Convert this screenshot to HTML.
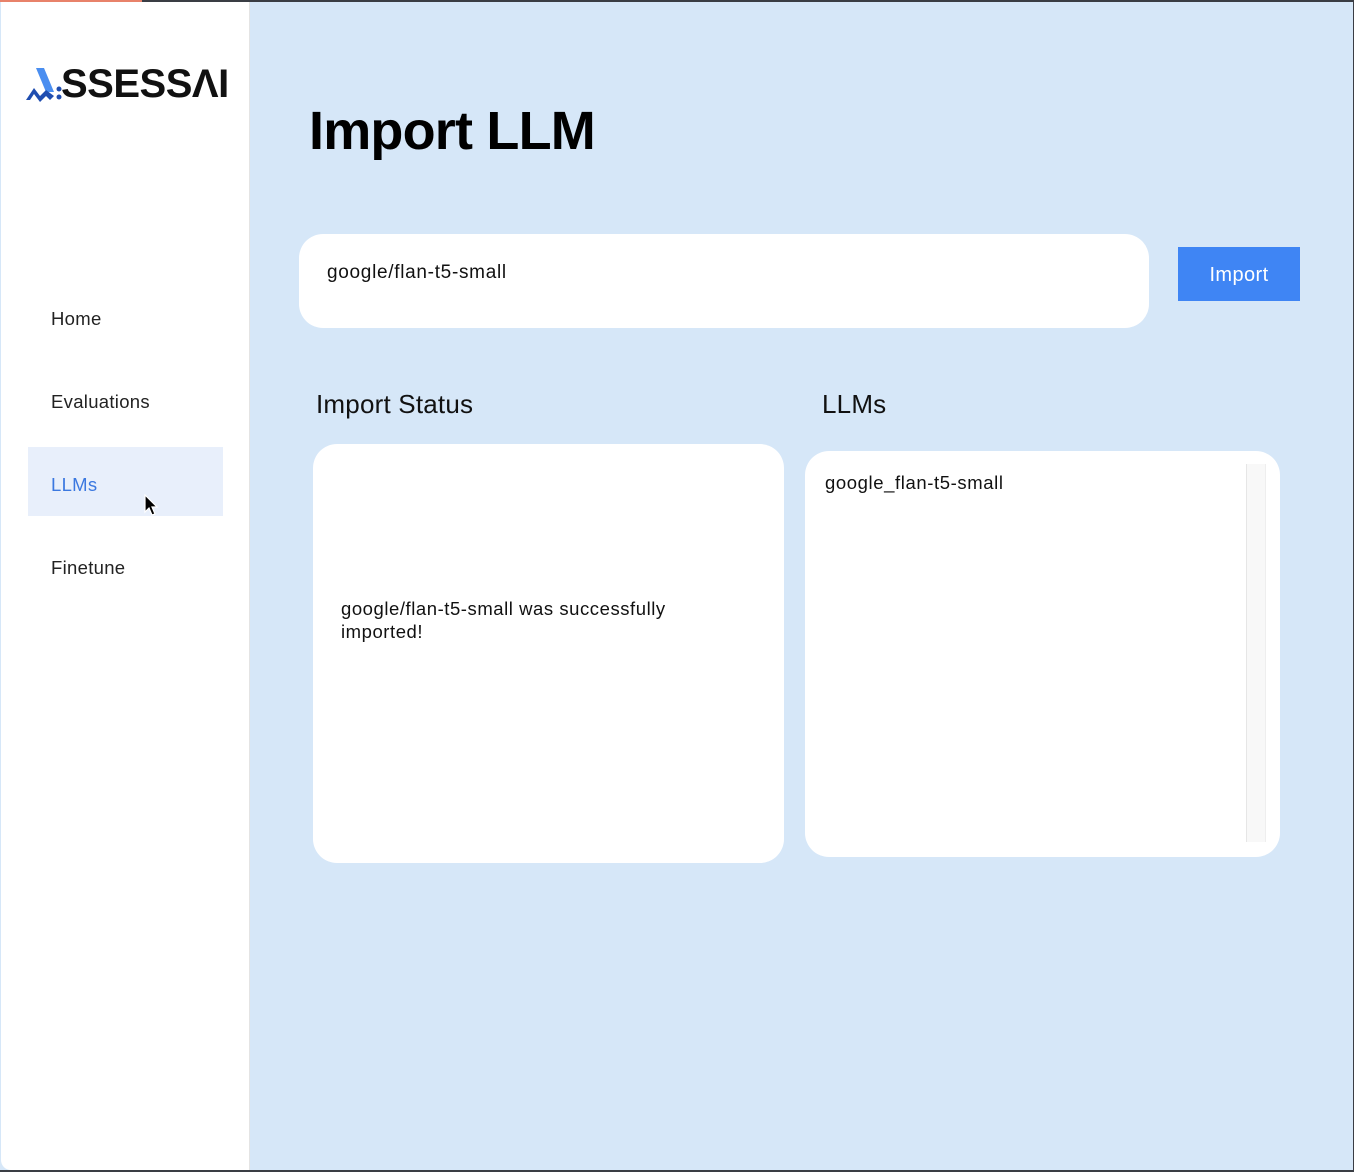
<!DOCTYPE html>
<html><head><meta charset="utf-8"><style>
*{margin:0;padding:0;box-sizing:border-box}
body{width:1354px;height:1172px;overflow:hidden;background:#d6e7f8;font-family:"Liberation Sans",sans-serif;position:relative;color:#111}
.topbar{position:absolute;left:0;top:0;width:1354px;height:2px;background:#3a3d44}
.topbar i{position:absolute;left:0;top:0;width:142px;height:2px;background:#e8826a}
.frame-b{position:absolute;left:0;bottom:0;width:1354px;height:2px;background:#3a3d44}
.frame-r{position:absolute;right:0;top:0;width:1px;height:1172px;background:#3a3d44}
.side{position:absolute;left:1px;top:2px;width:249px;height:1168px;background:#fff;border-right:1px solid #e4e4e4;border-radius:0 0 0 10px}
.logo{position:absolute;left:23px;top:64px;font-weight:bold;font-size:40px;letter-spacing:-0.5px;color:#111;line-height:36px}
.nav{position:absolute;left:50px;font-size:18.5px;letter-spacing:0.3px;color:#222}
.active{position:absolute;left:27px;top:445px;width:195px;height:69px;background:#e8effb}
h1{position:absolute;left:309px;top:100px;font-size:54px;font-weight:bold;letter-spacing:-0.8px;color:#000}
.input{position:absolute;left:299px;top:234px;width:850px;height:94px;background:#fff;border-radius:24px;font-size:19px;letter-spacing:0.7px;padding:28px 0 0 28px}
.btn{position:absolute;left:1178px;top:247px;width:122px;height:54px;background:#3f85f4;color:#fff;font-size:20px;letter-spacing:0.4px;text-align:center;line-height:56px}
.h2{position:absolute;font-size:26px;letter-spacing:0.2px;color:#111}
.card{position:absolute;background:#fff;border-radius:24px}
</style></head><body>
<div class="topbar"><i></i></div>
<div class="side">
 <div class="logo"><svg width="40" height="36" viewBox="0 0 40 36" style="vertical-align:top;margin-right:-3px"><path d="M12 2 L20 2 L30 26 L22 26 Z" fill="#4a8ef0"/><path d="M2 34 L10 22 L16 30 L22 24 L30 30 L26 34 L22 30 L16 36 L10 28 L6 34 Z" fill="#1f4db0"/><circle cx="35" cy="23" r="2.5" fill="#1f4db0"/><circle cx="35" cy="31" r="2.5" fill="#1f4db0"/></svg>SSESSΛI</div>
 <div class="active"></div>
 <div class="nav" style="top:306px">Home</div>
 <div class="nav" style="top:389px">Evaluations</div>
 <div class="nav" style="top:472px;color:#3b78e0">LLMs</div>
 <div class="nav" style="top:555px">Finetune</div>
 <svg style="position:absolute;left:142px;top:492px" width="16" height="24" viewBox="0 0 16 24"><path d="M2 1 L2 18 L6 14 L9 21 L12 20 L9 13 L14 13 Z" fill="#000" stroke="#fff" stroke-width="1.2"/></svg>
</div>
<h1>Import LLM</h1>
<div class="input">google/flan-t5-small</div>
<div class="btn">Import</div>
<div class="h2" style="left:316px;top:389px">Import Status</div>
<div class="h2" style="left:822px;top:389px">LLMs</div>
<div class="card" style="left:313px;top:444px;width:471px;height:419px">
 <div style="position:absolute;left:28px;top:153px;font-size:18.5px;letter-spacing:0.55px;line-height:23px;width:400px">google/flan-t5-small was successfully<br>imported!</div>
</div>
<div class="card" style="left:805px;top:451px;width:475px;height:406px">
 <div style="position:absolute;left:20px;top:21px;font-size:18.5px;letter-spacing:0.6px">google_flan-t5-small</div>
 <div style="position:absolute;left:441px;top:13px;width:20px;height:378px;background:#f8f8f8;border-left:1px solid #e6e6e6;border-right:1px solid #eee"></div>
</div>
<div class="frame-b"></div><div class="frame-r"></div>
</body></html>
